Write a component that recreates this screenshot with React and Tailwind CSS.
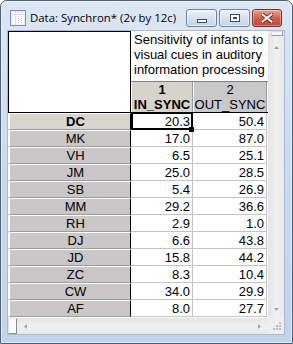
import React from 'react';

// rows of the spreadsheet: case id, IN_SYNC, OUT_SYNC
const rows = [
  ['DC', '20.3', '50.4'],
  ['MK', '17.0', '87.0'],
  ['VH', '6.5', '25.1'],
  ['JM', '25.0', '28.5'],
  ['SB', '5.4', '26.9'],
  ['MM', '29.2', '36.6'],
  ['RH', '2.9', '1.0'],
  ['DJ', '6.6', '43.8'],
  ['JD', '15.8', '44.2'],
  ['ZC', '8.3', '10.4'],
  ['CW', '34.0', '29.9'],
  ['AF', '8.0', '27.7'],
];

const Arrow = ({ dir }) => {
  const horiz = dir === 'left' || dir === 'right';
  const pts = {
    up: '0,3 2.5,0 5,3',
    down: '0,0 2.5,3 5,0',
    left: '3,0 0,2.5 3,5',
    right: '0,0 3,2.5 0,5',
  }[dir];
  const w = horiz ? 3 : 5;
  const h = horiz ? 5 : 3;
  return (
    <svg width={w} height={h} viewBox={`0 0 ${w} ${h}`}>
      <polygon points={pts} fill="#a4a4a4" />
    </svg>
  );
};

const SheetIcon = () => (
  <svg width="16" height="16" viewBox="0 0 16 16">
    <rect x="0.5" y="0.5" width="15" height="15" fill="#eef0fa" stroke="#8287d4" />
    <rect x="2" y="2" width="12" height="12" fill="#fbfbfd" />
    <path d="M5.5 2v12M8.5 2v12M11.5 2v12" stroke="#c9c9d6" strokeDasharray="1 1" />
    <path d="M2 4.5h12" stroke="#d8d8e4" />
  </svg>
);

const Grip = () => (
  <svg width="8" height="8" viewBox="0 0 8 8">
    <rect x="6" y="0" width="2" height="2" fill="#bdbdbd" />
    <rect x="3" y="3" width="2" height="2" fill="#bdbdbd" />
    <rect x="6" y="3" width="2" height="2" fill="#bdbdbd" />
    <rect x="0" y="6" width="2" height="2" fill="#bdbdbd" />
    <rect x="3" y="6" width="2" height="2" fill="#bdbdbd" />
    <rect x="6" y="6" width="2" height="2" fill="#bdbdbd" />
  </svg>
);

export default function App() {
  return (
    <div className="flex h-[344px] w-[293px] flex-col overflow-hidden rounded-t-[7px] border border-[#4e5f74] bg-gradient-to-b from-[#dce7f5] via-[#c9daef] to-[#bfd4ed] font-['Liberation_Sans',Arial,sans-serif] text-[13px] text-black shadow-[inset_0_0_0_1px_rgba(255,255,255,0.55)]">
      {/* TITLE BAR */}
      <div className="flex h-[29px] items-start">
        <div className="ml-[9px] mt-[9px]">
          <SheetIcon />
        </div>
        <span className="ml-[4px] mt-[9px] whitespace-nowrap font-['Open_Sans',sans-serif] text-[11.4px] leading-[16px] text-black">
          Data: Synchron* (2v by 12c)
        </span>
        <div className="ml-auto mr-[10px] mt-[8px] flex gap-[2px]">
          <div className="flex h-[18px] w-[31px] items-end justify-center rounded-[3px] border border-[#6f819c] bg-gradient-to-b from-[#eef3fa] via-[#d6e2f1] to-[#c3d3e8] pb-[3px] shadow-[inset_0_0_0_1px_rgba(255,255,255,0.6)]">
            <div className="h-[4px] w-[10px] border border-[#3b4a5e] bg-white" />
          </div>
          <div className="flex h-[18px] w-[31px] items-center justify-center rounded-[3px] border border-[#6f819c] bg-gradient-to-b from-[#eef3fa] via-[#d6e2f1] to-[#c3d3e8] shadow-[inset_0_0_0_1px_rgba(255,255,255,0.6)]">
            <div className="flex h-[8px] w-[10px] items-center justify-center border border-[#3b4a5e] bg-white">
              <div className="h-[2px] w-[4px] border border-[#3b4a5e]" />
            </div>
          </div>
          <div className="flex h-[18px] w-[30px] items-center justify-center rounded-[3px] border border-[#7d2f26] bg-gradient-to-b from-[#e8a595] via-[#d2604e] to-[#c14535] shadow-[inset_0_0_0_1px_rgba(255,255,255,0.35)]">
            <svg width="12" height="10" viewBox="0 0 12 10">
              <path d="M1.5 1.5l9 7M10.5 1.5l-9 7" stroke="#5a1f18" strokeWidth="3.6" strokeLinecap="square" />
              <path d="M1.5 1.5l9 7M10.5 1.5l-9 7" stroke="#ffffff" strokeWidth="2" strokeLinecap="square" />
            </svg>
          </div>
        </div>
      </div>

      {/* CLIENT AREA */}
      <div className="ml-[6px] mr-[7px] flex h-[305px] flex-col border border-[#a9bbd3] bg-white">
        <div className="flex h-[287px]">
          {/* GRID */}
          <div className="flex w-[260px] flex-col">
            <div className="flex h-[82px]">
              <div className="w-[123px] border border-black" />
              <div className="flex w-[137px] flex-col">
                <div className="h-[50px] whitespace-nowrap pl-[3px] pt-[1px] leading-[15px]">
                  Sensitivity of infants to
                  <br />
                  visual cues in auditory
                  <br />
                  information processing
                </div>
                <div className="flex h-[32px] border-t border-b border-t-[#808080] border-b-black">
                  <div className="w-[62px] border-l border-r border-l-white border-r-[#9a9a9a] bg-[#d6d3cd] text-center font-bold leading-[15px]">
                    1
                    <br />
                    IN_SYNC
                  </div>
                  <div className="w-[74px] border-l border-r border-l-white border-r-[#9a9a9a] bg-[#c9c9c9] text-center leading-[15px]">
                    2
                    <br />
                    OUT_SYNC
                  </div>
                </div>
              </div>
            </div>

            {rows.map(([id, a, b], i) => {
              const sel = i === 0;
              return (
                <div key={id} className="flex h-[17px]">
                  <div
                    className={
                      sel
                        ? 'w-[123px] border-t border-b border-l-2 border-r border-t-white border-b-[#9c9c9c] border-l-white border-r-black bg-[#d8d5cf] pl-[11px] pt-[1px] text-center font-bold leading-[14px]'
                        : 'w-[123px] border-t border-b border-l-2 border-r border-t-white border-b-[#9c9c9c] border-l-white border-r-black bg-[#c9c7c7] pl-[11px] pt-[1px] text-center leading-[14px]'
                    }
                  >
                    {id}
                  </div>
                  <div className="relative w-[62px] border-r border-b border-[#c4c4c4] pr-[2px] pt-[2px] text-right leading-[14px]">
                    {a}
                    {sel && (
                      <>
                        <div className="absolute left-0 top-0 right-[-1px] bottom-[-1px] border-x-2 border-b-2 border-t border-black" />
                        <div className="absolute left-[58px] top-[14px] z-10 h-[5px] w-[5px] bg-black" />
                      </>
                    )}
                  </div>
                  <div className="w-[74px] border-r border-b border-[#c4c4c4] pr-[2px] pt-[2px] text-right leading-[14px]">
                    {b}
                  </div>
                </div>
              );
            })}
          </div>

          {/* VERTICAL SCROLLBAR */}
          <div className="flex w-[16px] flex-col bg-gradient-to-r from-[#e4e4e4] via-[#f1f1f1] to-[#e9e9e9]">
            <div className="h-[8px]">
              <div className="ml-[3px] h-[5px] w-[12px] border border-[#9a9a9a] border-t-[#dcdcdc] border-l-[#dcdcdc] bg-[#f6f6f6]" />
            </div>
            <div className="flex h-[17px] items-center justify-center">
              <Arrow dir="up" />
            </div>
            <div className="flex-1" />
            <div className="flex h-[17px] items-center justify-center">
              <Arrow dir="down" />
            </div>
          </div>
        </div>

        {/* HORIZONTAL SCROLLBAR */}
        <div className="flex h-[16px]">
          <div className="w-[9px] border border-[#8c8c8c] border-t-[#e0e0e0] border-l-[#e0e0e0] bg-white" />
          <div className="flex w-[251px] bg-gradient-to-b from-[#e4e4e4] via-[#f1f1f1] to-[#e9e9e9]">
            <div className="flex w-[16px] items-center justify-center">
              <Arrow dir="left" />
            </div>
            <div className="flex-1" />
            <div className="mr-[1px] flex w-[16px] items-center justify-center">
              <Arrow dir="right" />
            </div>
          </div>
          <div className="flex w-[16px] items-end justify-end bg-[#efefef] pb-[4px] pr-[3px]">
            <Grip />
          </div>
        </div>
      </div>
    </div>
  );
}
